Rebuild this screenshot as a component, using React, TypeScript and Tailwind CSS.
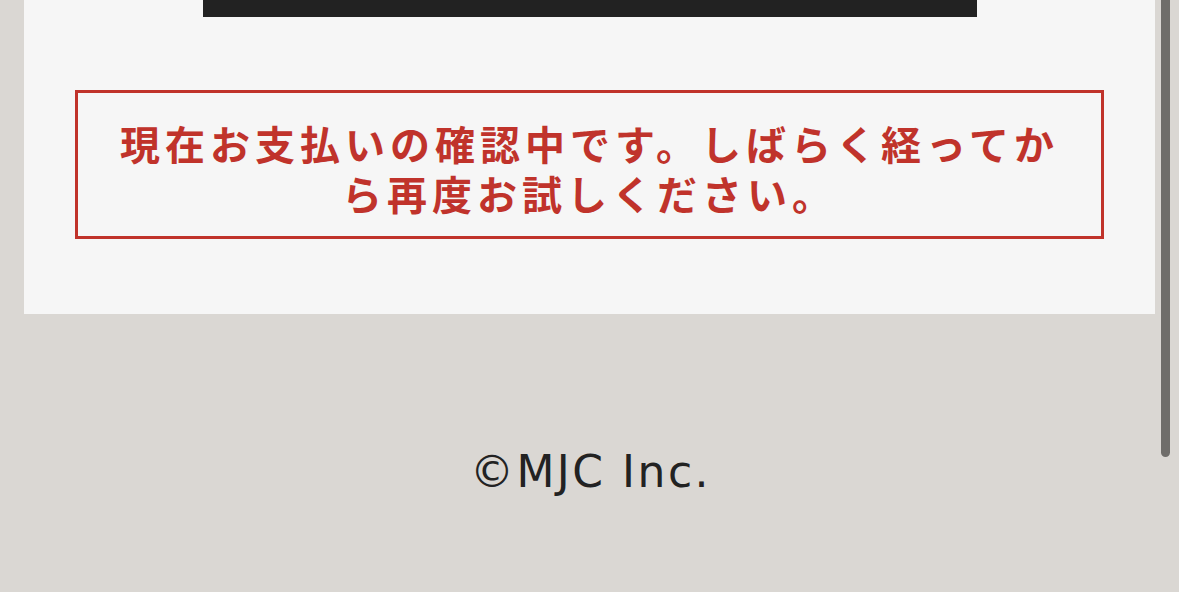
import React from "react";

export default function App() {
  return (
    <div className="relative min-h-[592px] bg-[#dad7d3] font-['Noto_Sans','Noto_Sans_CJK_JP',sans-serif]">
      <main className="mx-6 bg-[#f6f6f6] pb-[75px]">
        <div className="mx-auto h-[17px] w-[774px] bg-[#222222]" />
        <div className="mx-[51px] mt-[73px] border-[3px] border-[#c0332b] px-[27px] pb-[16px] pt-[27px]">
          <p className="text-center text-[40px] font-bold leading-[50px] tracking-[5px] text-[#c0332b]">
            現在お支払いの確認中です。しばらく経ってから再度お試しください。
          </p>
        </div>
      </main>

      <footer className="pt-[133px] text-center">
        <p className="pl-[2px] text-[44px] leading-[50px] tracking-[2.5px] text-[#222222] font-['DejaVu_Sans',sans-serif]">
          ©MJC Inc.
        </p>
      </footer>

      {/* scroll indicator */}
      <div className="absolute right-[9px] top-0 h-[457px] w-[9px] rounded-b-full bg-[#6f6d6a]" />
    </div>
  );
}
